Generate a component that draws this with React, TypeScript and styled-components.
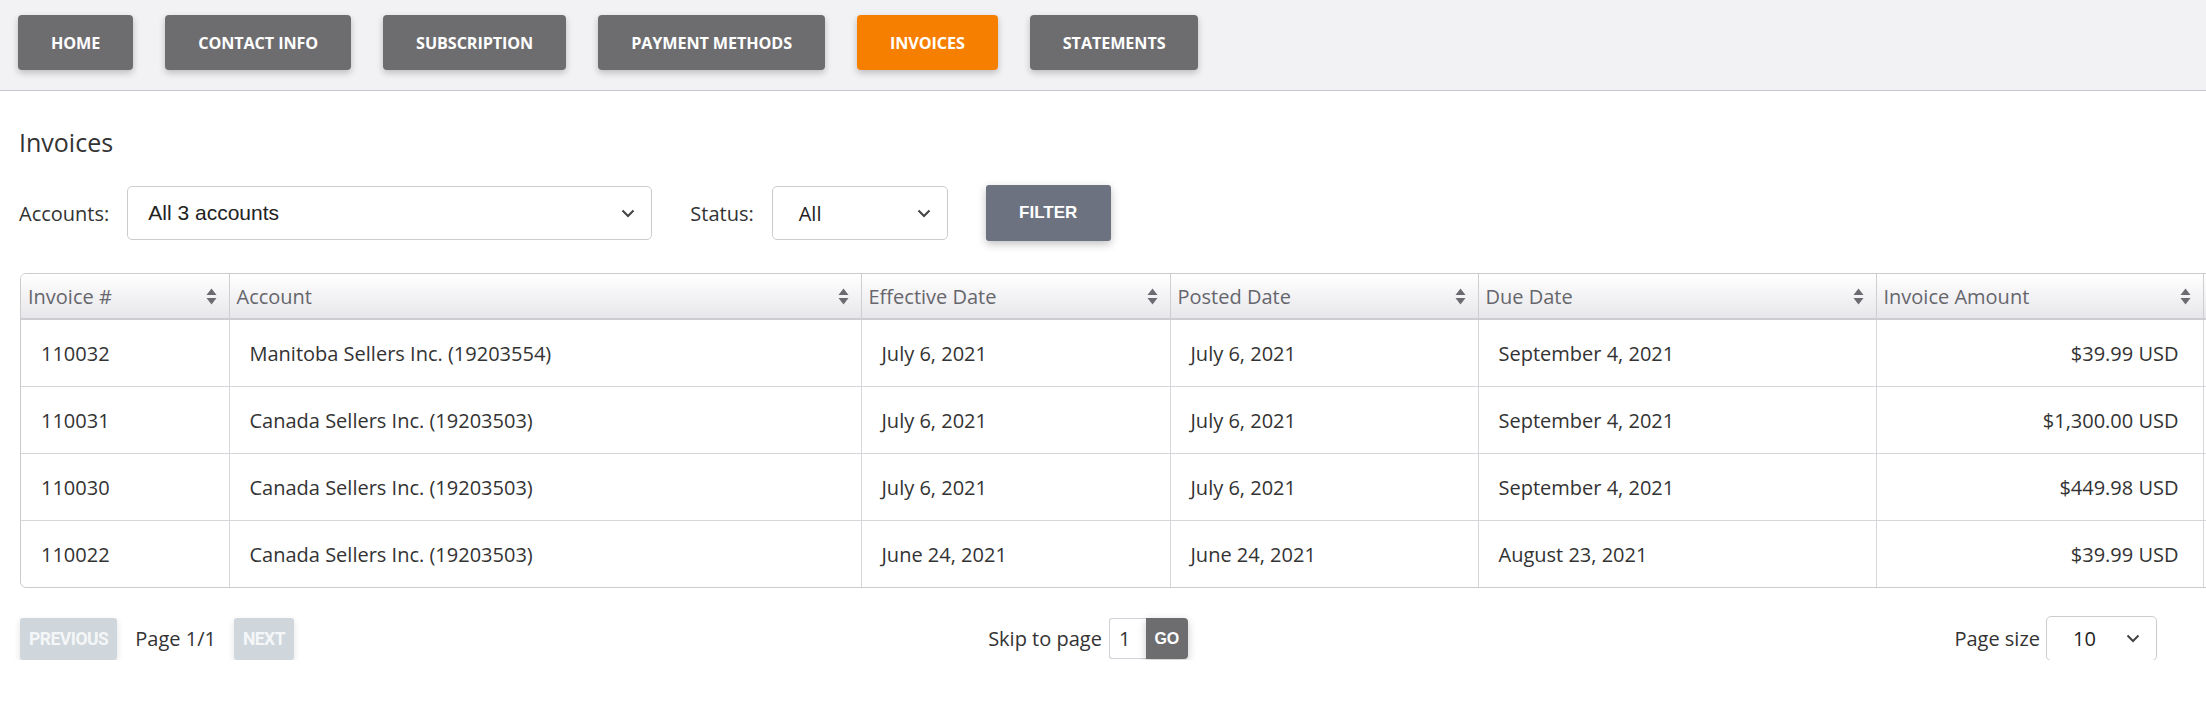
import React from 'react';
import styled, { createGlobalStyle } from 'styled-components';

const GlobalStyle = createGlobalStyle`
  body {
    margin: 0;
    background: #ffffff;
    font-family: 'Open Sans', 'Noto Sans', sans-serif;
    color: #333333;
    overflow: hidden;
  }
`;

const Page = styled.div`
  width: 2206px;
  overflow: hidden;
`;

const NavBar = styled.nav`
  display: flex;
  gap: 32px;
  padding: 15px 18px 20px;
  background: #f2f2f4;
  border-bottom: 1px solid #c6c6ca;
`;

const NavButton = styled.button<{ $active?: boolean }>`
  height: 55px;
  padding: 0 33px;
  border: none;
  border-radius: 4px;
  background: ${(p) => (p.$active ? '#f77f00' : '#6d6d6f')};
  color: #ffffff;
  font-family: 'Open Sans', sans-serif;
  font-weight: 700;
  font-size: 16.2px;
  letter-spacing: -0.1px;
  text-transform: uppercase;
  box-shadow: 0 3px 7px rgba(0, 0, 0, 0.22);
  cursor: pointer;
`;

const Content = styled.main`
  padding: 0 0 0 19px;
`;

const Title = styled.h1`
  margin: 35px 0 0;
  font-size: 25px;
  line-height: 32px;
  font-weight: 400;
  color: #333;
`;

const FilterRow = styled.div`
  display: flex;
  align-items: center;
  gap: 38px;
  margin-top: 27px;
  height: 56px;
`;

const Field = styled.label`
  display: flex;
  align-items: center;
  gap: 18px;
  font-size: 20px;
  color: #333;
`;

const SelectBox = styled.div<{ $width: number; $height: number; $arial?: boolean }>`
  box-sizing: border-box;
  display: flex;
  align-items: center;
  justify-content: space-between;
  width: ${(p) => p.$width}px;
  height: ${(p) => p.$height}px;
  padding: 0 16px 0 ${(p) => (p.$arial ? 20 : 26)}px;
  border: 1px solid #cccccc;
  border-radius: 5px;
  background: #fff;
  font-family: ${(p) => (p.$arial ? "'Liberation Sans', Arial, sans-serif" : "'Open Sans', sans-serif")};
  font-size: ${(p) => (p.$arial ? 21 : 20)}px;
  color: #222;
`;

const FilterButton = styled.button`
  width: 125px;
  height: 56px;
  border: none;
  border-radius: 3px;
  background: #6c7280;
  color: #fff;
  font-family: 'Liberation Sans', Arial, sans-serif;
  font-weight: 700;
  font-size: 17px;
  box-shadow: 0 3px 8px rgba(0, 0, 0, 0.25);
`;

const TableWrap = styled.div`
  margin-top: 32px;
  margin-left: 1px;
  width: 2400px;
  border: 1px solid #cccccc;
  border-radius: 6px;
  overflow: hidden;
`;

const Table = styled.table`
  width: 100%;
  table-layout: fixed;
  border-collapse: collapse;
`;

const HeadCell = styled.th`
  height: 44px;
  padding: 0 12px 0 7px;
  background: linear-gradient(#ffffff, #e7e7eb);
  border-right: 1px solid #cfcfd3;
  border-bottom: 2px solid #cdcdd1;
  text-align: left;
  font-weight: 400;
  font-size: 20px;
  color: #66666c;
`;

const HeadInner = styled.div`
  display: flex;
  align-items: center;
  justify-content: space-between;
`;

const Cell = styled.td<{ $right?: boolean }>`
  height: 66px;
  padding: ${(p) => (p.$right ? '0 24px 0 0' : '0 0 0 20px')};
  border-right: 1px solid #d6d6da;
  border-bottom: 1px solid #d6d6da;
  text-align: ${(p) => (p.$right ? 'right' : 'left')};
  font-size: 20px;
  color: #333;
`;

const Row = styled.tr`
  &:last-child td {
    border-bottom: none;
  }
`;

const Pager = styled.div`
  display: grid;
  grid-template-columns: 1fr auto 1fr;
  align-items: center;
  width: 2138px;
  margin-top: 28px;
  height: 44px;
`;

const PagerGroup = styled.div<{ $end?: boolean }>`
  display: flex;
  align-items: center;
  justify-content: ${(p) => (p.$end ? 'flex-end' : 'flex-start')};
  gap: 18px;
  padding-left: 1px;
  font-size: 20px;
  color: #333;
`;

const PageButton = styled.button`
  height: 42px;
  padding: 0 9px;
  border: none;
  border-radius: 3px;
  background: #cfd6dc;
  color: #f4f6f8;
  font-family: 'Roboto', sans-serif;
  font-weight: 700;
  font-size: 17.5px;
  letter-spacing: -0.5px;
  box-shadow: 0 3px 7px rgba(0, 0, 0, 0.12);
`;

const SkipGroup = styled.div`
  display: flex;
  align-items: center;
  font-size: 20px;
  color: #333;
`;

const SkipInput = styled.div`
  box-sizing: border-box;
  margin-left: 7px;
  width: 37px;
  height: 41px;
  padding-left: 9px;
  display: flex;
  align-items: center;
  border: 1px solid #cdd3d8;
  border-right: none;
  border-radius: 3px 0 0 3px;
  font-size: 20px;
`;

const GoButton = styled.button`
  width: 42px;
  height: 41px;
  border: none;
  border-radius: 0 4px 4px 0;
  background: #6d6d6f;
  color: #fff;
  font-family: 'Liberation Sans', Arial, sans-serif;
  font-weight: 700;
  font-size: 16px;
  padding: 0;
  box-shadow: 0 3px 8px rgba(0, 0, 0, 0.22);
`;

const SizeGroup = styled.div`
  display: flex;
  align-items: center;
  gap: 6px;
  font-size: 20px;
  color: #333;
`;

const Chevron = () => (
  <svg width="14" height="9" viewBox="0 0 14 9">
    <polyline points="1.5,1.5 7,7 12.5,1.5" fill="none" stroke="#444" strokeWidth="2" />
  </svg>
);

const SortIcon = () => (
  <svg width="11" height="17" viewBox="0 0 11 17">
    <polygon points="5.5,0.5 10.5,7 0.5,7" fill="#6b6b72" />
    <polygon points="0.5,10 10.5,10 5.5,16.5" fill="#6b6b72" />
  </svg>
);

const navItems = ['Home', 'Contact Info', 'Subscription', 'Payment Methods', 'Invoices', 'Statements'];

const columns = [
  { label: 'Invoice #', width: 208 },
  { label: 'Account', width: 632 },
  { label: 'Effective Date', width: 309 },
  { label: 'Posted Date', width: 308 },
  { label: 'Due Date', width: 398 },
  { label: 'Invoice Amount', width: 327 },
  { label: 'Balance', width: 218 },
];

const invoices = [
  ['110032', 'Manitoba Sellers Inc. (19203554)', 'July 6, 2021', 'July 6, 2021', 'September 4, 2021', '$39.99 USD', '$39.99 USD'],
  ['110031', 'Canada Sellers Inc. (19203503)', 'July 6, 2021', 'July 6, 2021', 'September 4, 2021', '$1,300.00 USD', '$1,300.00 USD'],
  ['110030', 'Canada Sellers Inc. (19203503)', 'July 6, 2021', 'July 6, 2021', 'September 4, 2021', '$449.98 USD', '$449.98 USD'],
  ['110022', 'Canada Sellers Inc. (19203503)', 'June 24, 2021', 'June 24, 2021', 'August 23, 2021', '$39.99 USD', '$39.99 USD'],
];

const App = () => {
  return (
    <Page>
      <GlobalStyle />
      <NavBar>
        {navItems.map((item) => (
          <NavButton key={item} $active={item === 'Invoices'}>
            {item}
          </NavButton>
        ))}
      </NavBar>
      <Content>
        <Title>Invoices</Title>
        <FilterRow>
          <Field>
            Accounts:
            <SelectBox $width={525} $height={54} $arial>
              All 3 accounts
              <Chevron />
            </SelectBox>
          </Field>
          <Field>
            Status:
            <SelectBox $width={176} $height={54}>
              All
              <Chevron />
            </SelectBox>
          </Field>
          <FilterButton>FILTER</FilterButton>
        </FilterRow>

        <TableWrap>
          <Table>
            <colgroup>
              {columns.map((c) => (
                <col key={c.label} style={{ width: c.width }} />
              ))}
            </colgroup>
            <thead>
              <tr>
                {columns.map((c) => (
                  <HeadCell key={c.label}>
                    <HeadInner>
                      {c.label}
                      <SortIcon />
                    </HeadInner>
                  </HeadCell>
                ))}
              </tr>
            </thead>
            <tbody>
              {invoices.map((row) => (
                <Row key={row[0]}>
                  {row.map((value, i) => (
                    <Cell key={i} $right={i >= 5}>
                      {value}
                    </Cell>
                  ))}
                </Row>
              ))}
            </tbody>
          </Table>
        </TableWrap>

        <Pager>
          <PagerGroup>
            <PageButton>PREVIOUS</PageButton>
            Page 1/1
            <PageButton>NEXT</PageButton>
          </PagerGroup>
          <SkipGroup>
            Skip to page
            <SkipInput>1</SkipInput>
            <GoButton>GO</GoButton>
          </SkipGroup>
          <PagerGroup $end>
            <SizeGroup>
              Page size
              <SelectBox $width={111} $height={45}>
                10
                <Chevron />
              </SelectBox>
            </SizeGroup>
          </PagerGroup>
        </Pager>
      </Content>
    </Page>
  );
};

export default App;
